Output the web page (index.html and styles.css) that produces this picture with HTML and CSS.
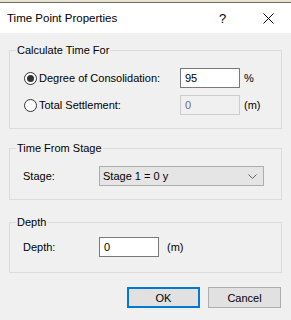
FILE: index.html
```html
<!DOCTYPE html>
<html lang="en">
<head>
    <meta charset="UTF-8">
    <meta name="viewport" content="width=device-width, initial-scale=1.0">
    <title>Time Point Properties</title>
    <link rel="stylesheet" href="styles.css">
</head>
<body>
    <div class="backdrop"></div>
    <div class="dialog">
        <div class="titlebar">
            <span class="title">Time Point Properties</span>
            <span class="help">?</span>
            <span class="close">
                <svg width="11" height="11" viewBox="0 0 11 11"><path d="M0.5 0.5 L10.5 10.5 M10.5 0.5 L0.5 10.5" stroke="#000" stroke-width="1" fill="none"/></svg>
            </span>
        </div>

        <div class="content">
            <fieldset class="group group-calc">
                <legend>Calculate Time For</legend>
                <div class="row">
                    <label class="radio"><span class="circle checked"></span>Degree of Consolidation:</label>
                    <input type="text" class="field" value="95">
                    <span class="unit">%</span>
                </div>
                <div class="row">
                    <label class="radio"><span class="circle"></span>Total Settlement:</label>
                    <input type="text" class="field" value="0" disabled>
                    <span class="unit">(m)</span>
                </div>
            </fieldset>

            <fieldset class="group group-stage">
                <legend>Time From Stage</legend>
                <div class="row row-plain">
                    <span class="label">Stage:</span>
                    <div class="combo">
                        <span>Stage 1 = 0 y</span>
                        <svg width="9" height="5" viewBox="0 0 9 5"><path d="M0.5 0.5 L4.5 4.5 L8.5 0.5" stroke="#606060" stroke-width="1" fill="none"/></svg>
                    </div>
                </div>
            </fieldset>

            <fieldset class="group group-depth">
                <legend>Depth</legend>
                <div class="row row-plain">
                    <span class="label">Depth:</span>
                    <input type="text" class="field" value="0">
                    <span class="unit unit-depth">(m)</span>
                </div>
            </fieldset>

            <div class="buttons">
                <button class="btn btn-default">OK</button>
                <button class="btn">Cancel</button>
            </div>
        </div>
    </div>
</body>
</html>
```

FILE: styles.css
```css
body {
    font-family: "Liberation Sans", Arial, sans-serif;
    font-size: 11px;
    margin: 0;
    padding: 0;
    width: 291px;
    height: 320px;
    background-color: #f0f0f0;
    color: #000;
    overflow: hidden;
}
.backdrop {
    height: 2px;
    background: #e6e3cf;
    border-bottom: 1px solid #6b6b6b;
}
.titlebar {
    display: flex;
    align-items: center;
    height: 30px;
    background: white;
    padding-left: 7px;
    font-size: 11.5px;
}
.title {
    flex: 1;
    line-height: 16px;
}
.help {
    width: 12px;
    margin-right: 32px;
    font-size: 13px;
}
.close {
    display: flex;
    margin-right: 17px;
}
.content {
    padding-top: 9px;
}
.group {
    margin: 0 9px;
    padding: 10px 0 13px 0;
    border: 1px solid #dcdcdc;
    min-inline-size: 0;
}
.group legend {
    margin-left: 6px;
    padding: 0 1px;
    line-height: 16px;
}
.group-calc .row {
    margin-left: 14px;
}
.group-stage {
    margin-top: 11px;
    padding-bottom: 13px;
}
.group-depth {
    margin-top: 14px;
    padding-top: 7px;
    padding-bottom: 15px;
}
.row {
    display: flex;
    align-items: center;
    height: 20px;
}
.row + .row {
    margin-top: 7px;
}
.row-plain {
    margin-left: 13px;
}
.radio {
    display: flex;
    align-items: center;
    width: 156px;
}
.circle {
    box-sizing: border-box;
    width: 13px;
    height: 13px;
    border: 1px solid #333;
    border-radius: 50%;
    margin-right: 2px;
    position: relative;
    background: white;
}
.circle.checked::after {
    content: "";
    position: absolute;
    left: 2px;
    top: 2px;
    width: 7px;
    height: 7px;
    border-radius: 50%;
    background: #333;
}
.label {
    width: 76px;
}
.field {
    box-sizing: border-box;
    width: 60px;
    height: 20px;
    margin: 0;
    padding: 0 4px;
    border: 1px solid #7a7a7a;
    background: white;
    font-family: inherit;
    font-size: inherit;
    color: #000;
    outline: none;
}
.field:disabled {
    border-color: #cccccc;
    background: #f0f0f0;
    color: #6d6d6d;
}
.unit {
    margin-left: 4px;
}
.unit-depth {
    margin-left: 8px;
}
.combo {
    box-sizing: border-box;
    display: flex;
    align-items: center;
    justify-content: space-between;
    width: 165px;
    height: 20px;
    padding: 0 6px 0 3px;
    border: 1px solid #adadad;
    background: #e5e5e5;
}
.buttons {
    display: flex;
    justify-content: flex-end;
    gap: 8px;
    margin-top: 14px;
    margin-right: 10px;
}
.btn {
    box-sizing: border-box;
    width: 73px;
    height: 21px;
    padding: 0;
    border: 1px solid #adadad;
    background: #e1e1e1;
    font-family: inherit;
    font-size: inherit;
    color: #000;
}
.btn-default {
    border: 2px solid #0078d7;
}
```
